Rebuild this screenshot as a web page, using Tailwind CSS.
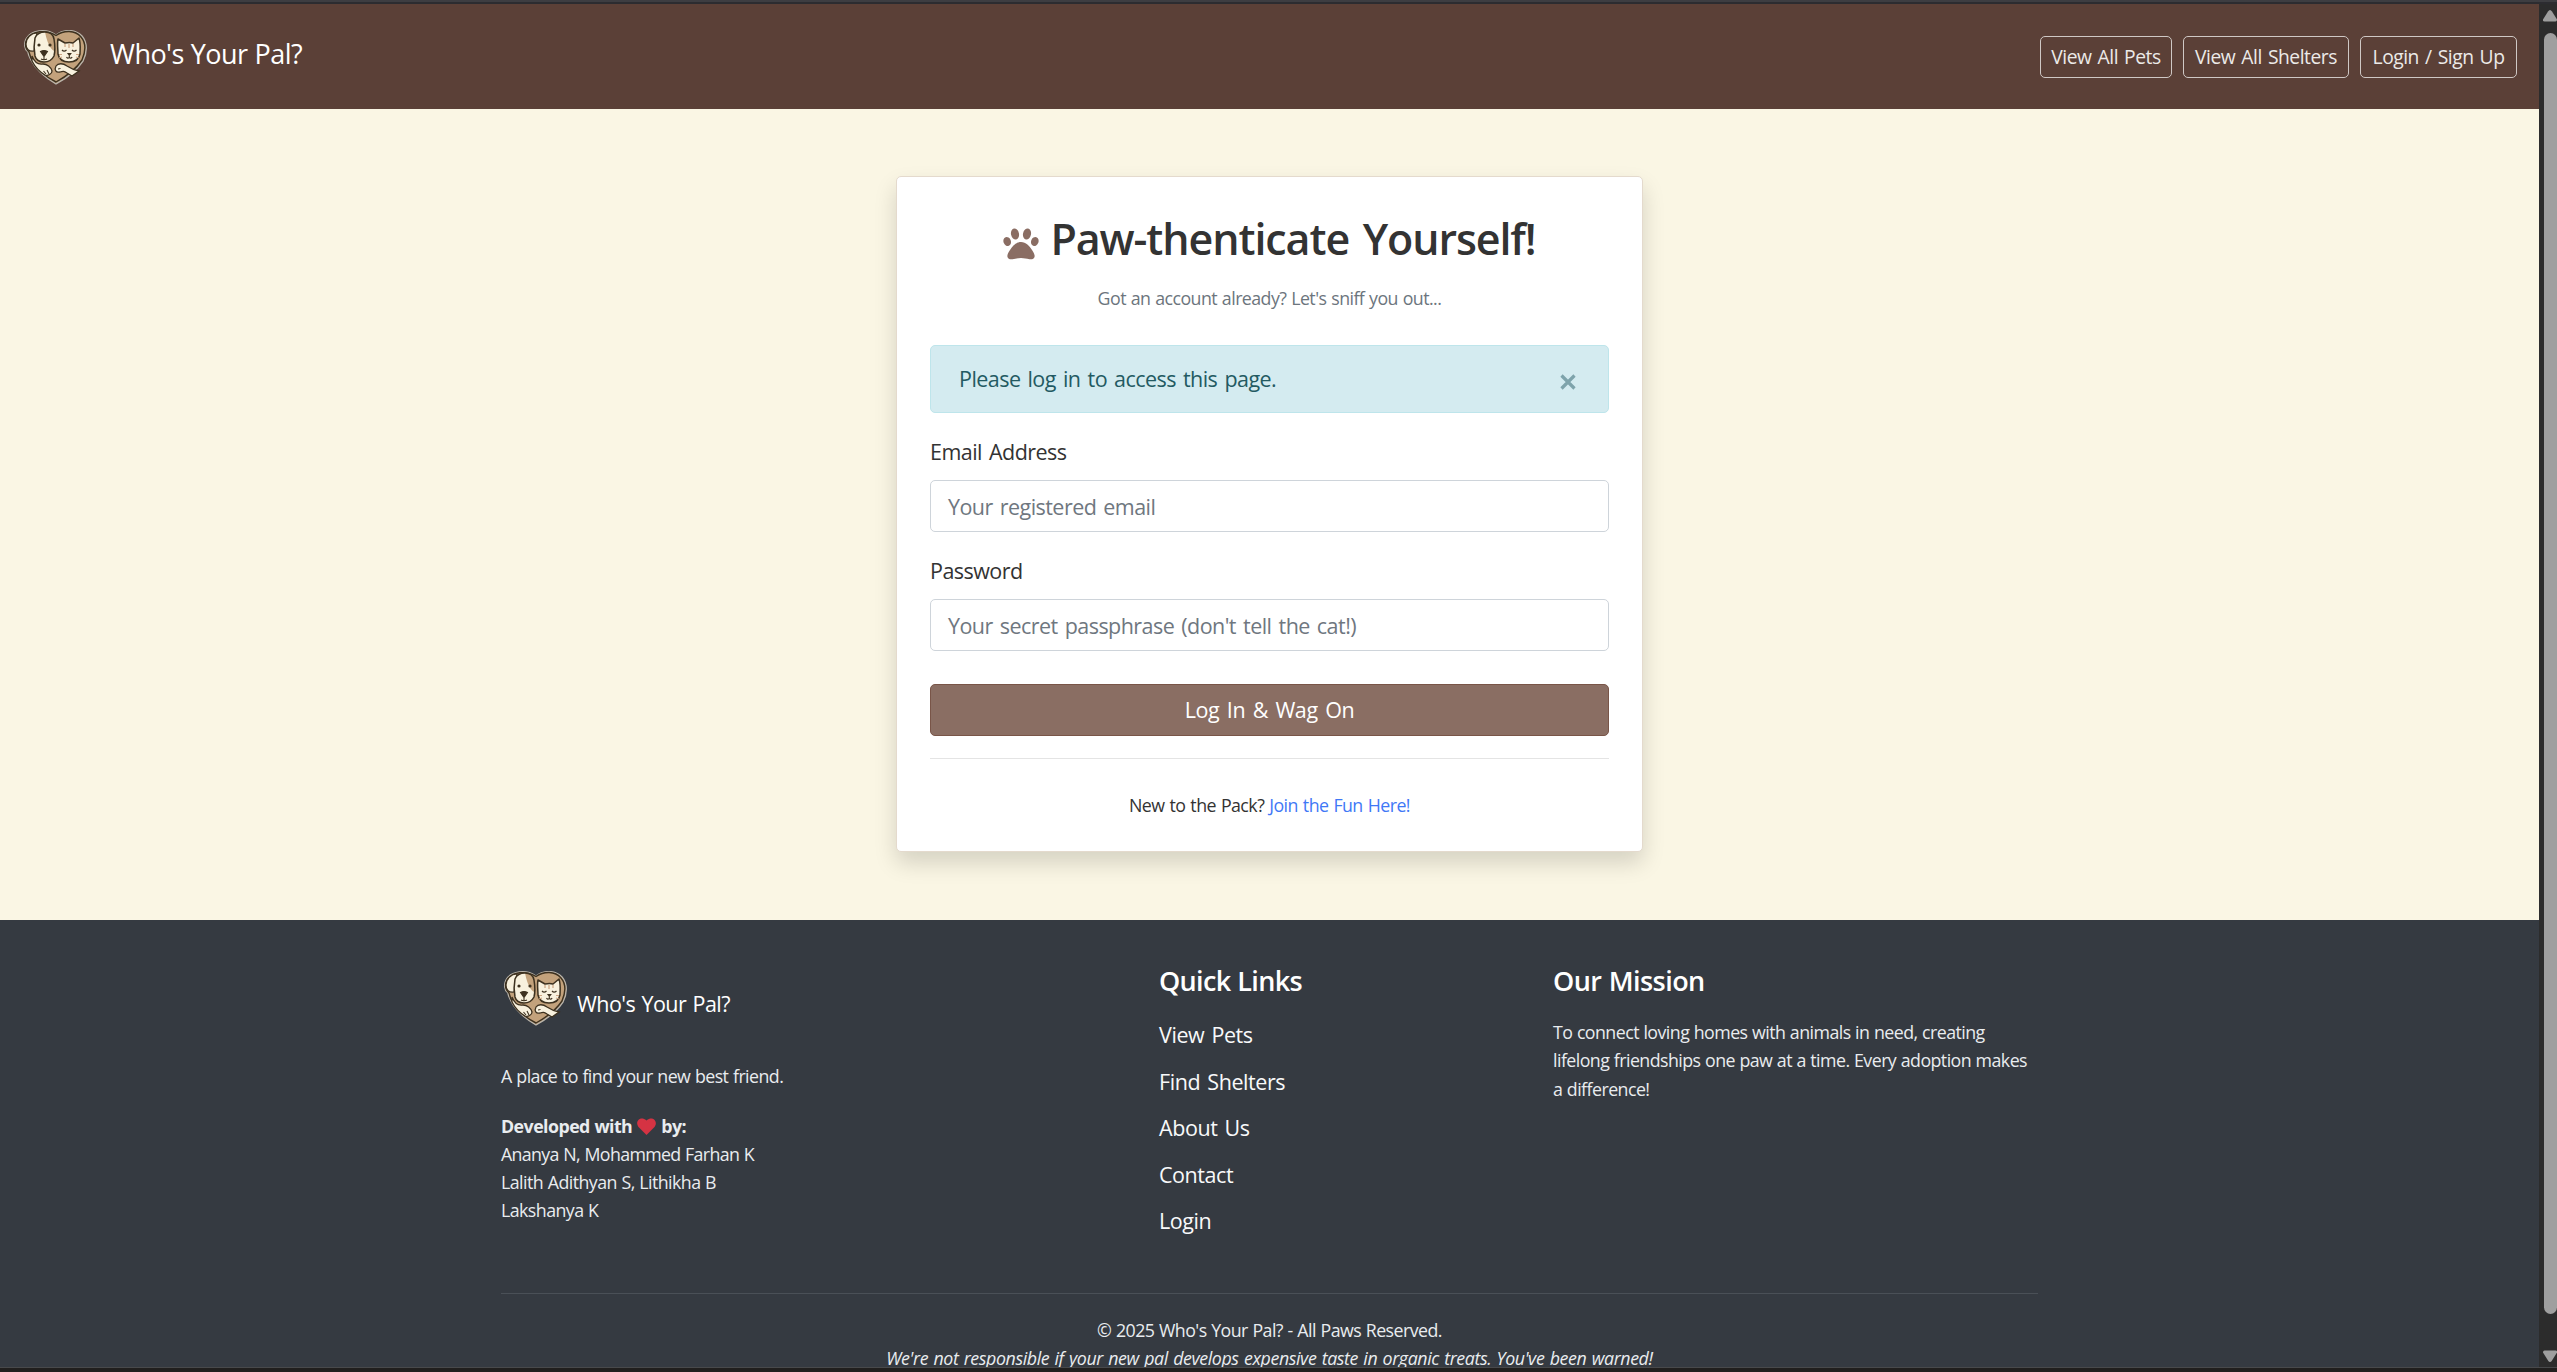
<!DOCTYPE html>
<html lang="en">
<head>
<meta charset="utf-8">
<title>Who's Your Pal? - Login</title>
<script src="https://cdn.jsdelivr.net/npm/@tailwindcss/browser@4"></script>
</head>
<body class="h-[1372px] overflow-hidden bg-[#211f1e] font-['Open_Sans',sans-serif] text-[21.5px] leading-[33px] tracking-[-0.55px] [word-spacing:0.095em] text-[#333] whitespace-nowrap">
<svg class="hidden">
  <symbol id="logo" viewBox="0 0 63 55">
    <path d="M32 5C40-1 51-1 58 6c6 7 5 17 1 25C53 40 43 48 32 54 22 48 12 40 7 30 5 26 4 24 4 22 0 19 0 13 2 9 7 0 22-2 32 5z" fill="#c3a27c" stroke="#b9b4ab" stroke-width="1.4"/>
    <path d="M32 5.500C40 0 51 0 57 7c6 7 4 16 1 23C52 39 43 46 32 52 22 47 13 39 8 30 6 27 6 24 5 22 1 18 1 13 3 9 8 1 22-1 32 5.500z" fill="none" stroke="#3d311f" stroke-width="1.400"/>
    <path d="M13 3C7 3 2 8 2 14c0 5 3 8 8 7z" fill="#f8f1de" stroke="#3d311f" stroke-width="1.200"/>
    <path d="M8 26c2 5 6 9 11 8 4 0 8 3 9 7 0 3-4 5-7 4-5-3-10-8-13-14z" fill="#f8f1de" stroke="#3d311f" stroke-width="1.300"/>
    <path d="M23 40l2 4M19.500 41l2.500 3" stroke="#3d311f" stroke-width="1.100"/>
    <path d="M55 41c-5-1-9-3-12-5-4-3-9-3-11 0-2 4 0 7 4 6 3-1 4-1 7 1l5 3z" fill="#f8f1de" stroke="#3d311f" stroke-width="1.300"/>
    <path d="M34 39l2.500-.500" stroke="#3d311f"/>
    <path d="M11 8c2-5 6-6 10-6s8 2 9 7c1 6 1 13 0 17-2 4-6 6-10 6s-8-2-9-6c-1-5-1-13 0-18z" fill="#f8f1de"/>
    <path d="M21 2c5 0 8 2 9 7 1 5 1 9 .500 12-3-1-7-6-9.500-19z" fill="#c3a27c"/>
    <path d="M11 8c2-5 6-6 10-6s8 2 9 7c1 6 1 13 0 17-2 4-6 6-10 6s-8-2-9-6c-1-5-1-13 0-18z" fill="none" stroke="#3d311f" stroke-width="1.500"/>
    <path d="M16.500 21.500q3.500-2 7 0l-3.500 5zM20 26v3M17 29q3 1.500 6 0" fill="#3d311f" stroke="#3d311f" stroke-width="1.100"/>
    <circle cx="15" cy="15" r="1.600" fill="#3d311f"/><circle cx="26" cy="15" r="1.600" fill="#3d311f"/>
    <path d="M34 9l7 4q5-1 8 0l6-5c2 6 1 12 1 16-1 5-5 8-11 8s-10-3-11-8c0-5-1-10 0-15z" fill="#f8f1de" stroke="#3d311f" stroke-width="1.500" stroke-linejoin="round"/>
    <path d="M41 14v3M45 14v4M49 14v3M35 24.500l3 0M35 28l3-1M55 24.500l-3 0M55 28l-3-1" stroke="#cda684" stroke-width="1.200"/>
    <path d="M38 20q2 2.200 4.500 0M48 20q2 2.200 4.500 0" fill="none" stroke="#3d311f" stroke-width="1.200"/>
    <path d="M44 23.500h2.800l-1.400 1.800zM45.300 25v2.500M42.500 27q1 2 2.800.500 1.800 1.500 2.800-.500" fill="none" stroke="#3d311f" stroke-width="1.100"/>
  </symbol>
</svg>
<div class="h-[2px] bg-[#3d3d41]"></div>
<div class="h-[2px] bg-[#2c2c30]"></div>
<div class="flex h-[1363px] overflow-hidden">
  <div class="w-[2539px] bg-[#faf6e4]">
    <header class="flex h-[105px] items-start bg-[#5b4037] pr-[22px] pl-6">
      <svg class="mt-[26px] h-[55px] w-[63px]"><use href="#logo"/></svg>
      <span class="mt-[30px] ml-[23px] text-[27px] leading-10 [word-spacing:0.02em] text-white">Who's Your Pal?</span>
      <nav class="mt-8 ml-auto flex gap-[11px] text-[19.300px] leading-[40px] tracking-[-0.025em] [word-spacing:0.08em] text-[#eceae8]">
        <a class="h-[42px] w-[132px] rounded-[5px] border border-[#cfc8c5] text-center">View All Pets</a>
        <a class="h-[42px] w-[166px] rounded-[5px] border border-[#cfc8c5] text-center">View All Shelters</a>
        <a class="h-[42px] w-[157px] rounded-[5px] border border-[#cfc8c5] text-center">Login / Sign Up</a>
      </nav>
    </header>
    <main class="flex h-[811px] justify-center pt-[67px]">
      <section class="flex h-[676px] w-[747px] flex-col rounded-[5px] border border-[#e4dacd] bg-white px-[33px] shadow-[0_11px_22px_rgba(0,0,0,0.15)]">
        <h1 class="mt-[34px] flex h-[56px] items-center justify-center gap-[11px] text-[43px] leading-[56px] font-semibold tracking-[-0.025em] [word-spacing:0.08em]">
          <svg class="mt-[10px] h-[32px] w-[36px]" viewBox="0 0 36 32" fill="#8a6d63"><ellipse cx="12" cy="6" rx="4" ry="5.600" transform="rotate(-12 12 6)"/><ellipse cx="24" cy="6" rx="4" ry="5.600" transform="rotate(12 24 6)"/><ellipse cx="4.200" cy="13.500" rx="3.700" ry="4.600" transform="rotate(-20 4.200 13.500)"/><ellipse cx="31.800" cy="13.500" rx="3.700" ry="4.600" transform="rotate(20 31.800 13.500)"/><path d="M18 14c5 0 8.500 4 11 8 2 3 3 5 2.500 7-.500 2-2.500 2.500-5 2.200-3-.400-5.500-1.200-8.500-1.200s-5.500.800-8.500 1.200c-2.500.300-4.500-.200-5-2.200-.500-2 .500-4 2.500-7 2.500-4 6-8 11-8z"/></svg>
          <span>Paw-thenticate Yourself!</span>
        </h1>
        <p class="mt-[18px] text-center text-[17.800px] leading-[26px] [word-spacing:0.04em] text-[#6c757d]">Got an account already? Let's sniff you out...</p>
        <div class="mt-[34px] flex h-[68px] items-center justify-between rounded-[5px] border border-[#bee5eb] bg-[#d4ebf0] pr-[32px] pl-7 text-[#235a62]">
          <span class="mb-[2px]">Please log in to access this page.</span>
          <svg class="mt-[6px] h-4 w-4" viewBox="0 0 16 16" stroke="#7ea3ab" stroke-width="3.200"><path d="M1.500 1.500l13 13M14.500 1.500l-13 13"/></svg>
        </div>
        <label class="mt-[22px]">Email Address</label>
        <div class="mt-3 h-[52px] rounded-[5px] border border-[#ced4da] pl-[17px] leading-[51px] text-[#6f777f]">Your registered email</div>
        <label class="mt-[22px]">Password</label>
        <div class="mt-3 h-[52px] rounded-[5px] border border-[#ced4da] pl-[17px] leading-[51px] text-[#6f777f]">Your secret passphrase (don't tell the cat!)</div>
        <button class="mt-[33px] h-[52px] rounded-[5px] border border-[#795548] bg-[#8a6e63] leading-[50px] tracking-[-0.02em] text-white [word-spacing:0.11em]">Log In &amp; Wag On</button>
        <hr class="mt-[22px] border-[#e4e4e4]">
        <p class="mt-8 text-center text-[17.800px] leading-[28px] [word-spacing:0.05em]">New to the Pack? <a class="text-[#3f78f6]">Join the Fun Here!</a></p>
      </section>
    </main>
    <footer class="flex h-[480px] flex-col bg-[#353a41] px-[501px] text-[#e9ecef]">
      <div class="flex h-[374px] border-b border-[#4a5057]">
        <div class="w-[658px] pt-[51px] text-[17.800px] leading-[28px] [word-spacing:0.03em]">
          <div class="flex h-[56px] items-start pl-[3px]">
            <svg class="h-[55px] w-[63px]"><use href="#logo"/></svg>
            <span class="mt-[16px] ml-[10px] text-[21.500px] leading-[33px] [word-spacing:0.06em] text-white">Who's Your Pal?</span>
          </div>
          <p class="mt-[35px]">A place to find your new best friend.</p>
          <p class="mt-[22px] flex items-center font-bold">Developed with <svg class="mx-[5px] h-[17px] w-[19px]" viewBox="0 0 19 17" fill="#d53343"><path d="M9.500 17L1.500 9C-2.500 4 3-3 9.500 2.500 16-3 21.500 4 17.500 9z"/></svg>by:</p>
          <p class="tracking-[-0.65px]">Ananya N, Mohammed Farhan K</p>
          <p>Lalith Adithyan S, Lithikha B</p>
          <p>Lakshanya K</p>
        </div>
        <div class="w-[394px] pt-[40px]">
          <h2 class="mb-[16px] text-[27px] leading-[42px] font-semibold tracking-[-0.645px] [word-spacing:0.01em] text-white">Quick Links</h2>
          <ul class="flex flex-col gap-[13.500px] tracking-[-0.02em] text-[#f8f9fa]"><li>View Pets</li><li>Find Shelters</li><li>About Us</li><li>Contact</li><li>Login</li></ul>
        </div>
        <div class="pt-[40px]">
          <h2 class="mb-[16px] text-[27px] leading-[42px] font-semibold [word-spacing:0.03em] text-white">Our Mission</h2>
          <p class="text-[17.800px] leading-[28.400px] [word-spacing:0.025em]">To connect loving homes with animals in need, creating<br>lifelong friendships one paw at a time. Every adoption makes<br>a difference!</p>
        </div>
      </div>
      <p class="mt-[22px] text-center text-[17.800px] leading-[28px] [word-spacing:0.03em]">© 2025 Who's Your Pal? - All Paws Reserved.<br><i class="tracking-[-0.39px] [word-spacing:0.06em]">We're not responsible if your new pal develops expensive taste in organic treats. You've been warned!</i></p>
    </footer>
  </div>
  <div class="flex w-[18px] flex-col items-end bg-[#2c2c2c]">
    <svg class="mt-[6px] h-3 w-[14px]" viewBox="0 0 14 12" fill="#9f9f9f"><path d="M7 0q1 0 2 1.500l5 8q0 2-1.500 2h-11q-2 0-1.500-2l5-8Q6 0 7 0z"/></svg>
    <div class="mt-[11px] h-[1281px] w-[13px] rounded-full bg-[#9f9f9f]"></div>
    <svg class="mt-[36px] h-3 w-[14px] rotate-180" viewBox="0 0 14 12" fill="#9f9f9f"><path d="M7 0q1 0 2 1.500l5 8q0 2-1.500 2h-11q-2 0-1.500-2l5-8Q6 0 7 0z"/></svg>
  </div>
</div>
<div class="h-px bg-[#48494b]"></div>
</body>
</html>
